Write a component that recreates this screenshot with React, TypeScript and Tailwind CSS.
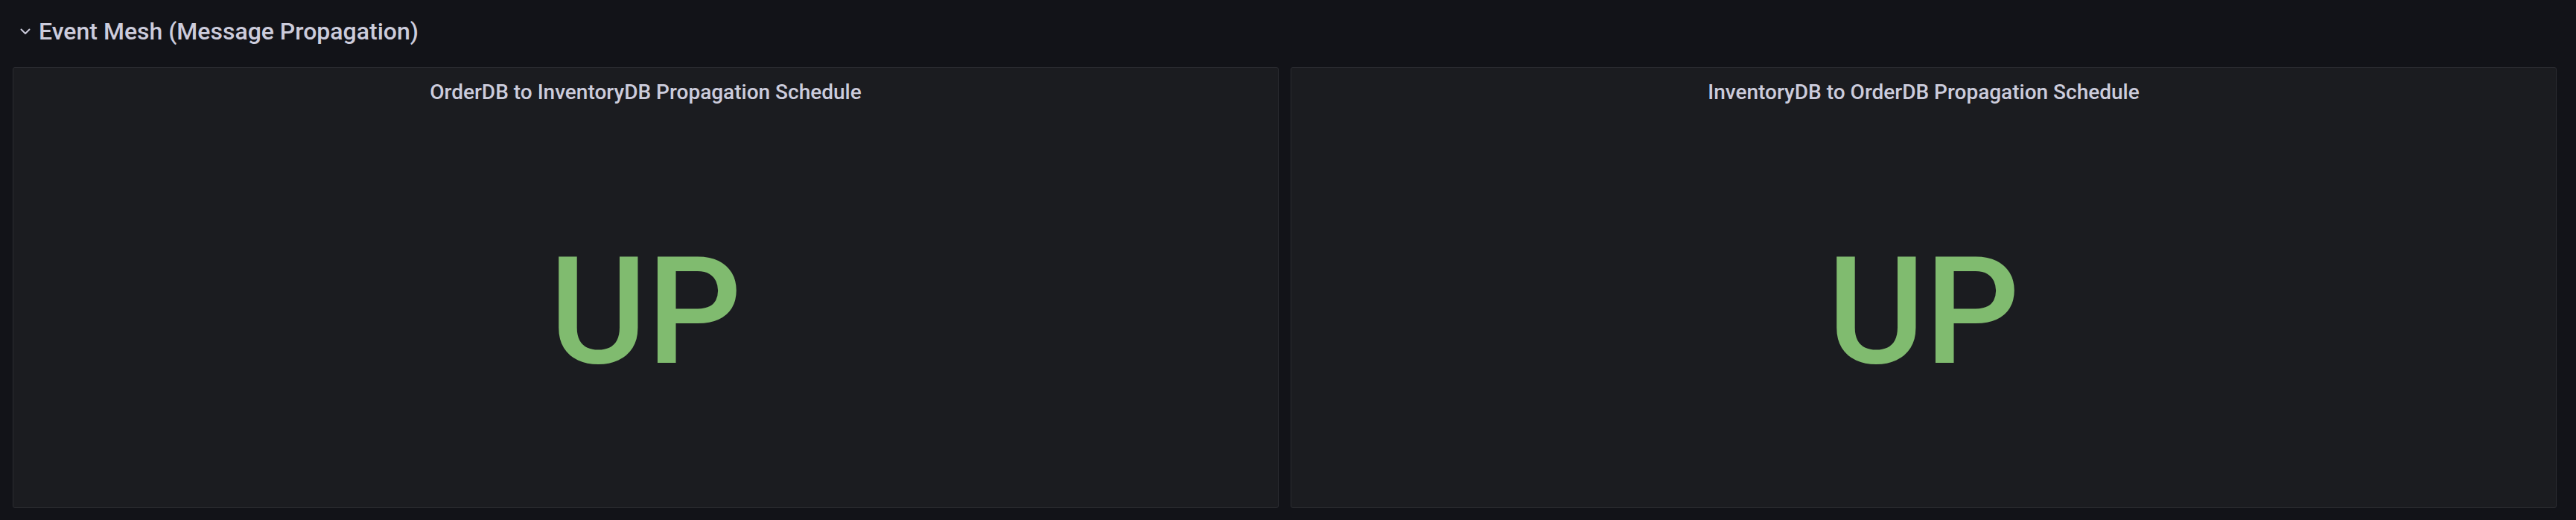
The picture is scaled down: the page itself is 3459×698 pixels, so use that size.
const panels = [
  { id: 'order-to-inventory', title: 'OrderDB to InventoryDB Propagation Schedule', value: 'UP' },
  { id: 'inventory-to-order', title: 'InventoryDB to OrderDB Propagation Schedule', value: 'UP' },
];

const Chevron = () => (
  <svg width="14" height="9" viewBox="0 0 14 9" fill="none" className="shrink-0">
    <path d="M1.5 1.5 L7 7 L12.5 1.5" stroke="#ccccdc" strokeWidth="2" strokeLinecap="round" strokeLinejoin="round" />
  </svg>
);

const StatPanel = ({ title, value }: { title: string; value: string }) => (
  <div className="flex-1 flex flex-col bg-[#1b1c20] border border-[#2b2c31] rounded-[3px] overflow-hidden">
    {/* panel header */}
    <div className="h-[66px] flex items-center justify-center">
      <h2 className="text-[28px] font-medium text-[#ccccdc] leading-none">{title}</h2>
    </div>
    {/* big stat value */}
    <div className="flex-1 flex items-center justify-center">
      <span className="text-[200px] leading-none font-medium text-[#80bb6f]">{value}</span>
    </div>
  </div>
);

export default function App() {
  return (
    <div
      className="w-full h-[698px] bg-[#121318] flex flex-col"
      style={{ fontFamily: 'Roboto, "Liberation Sans", "Noto Sans", sans-serif' }}
    >
      {/* Row header */}
      <div className="h-[84px] shrink-0 flex items-center gap-[11px] pl-[27px]">
        <Chevron />
        <span className="text-[32px] font-medium text-[#ccccdc] leading-none">Event Mesh (Message Propagation)</span>
      </div>

      {/* Panels */}
      <div className="flex-1 flex gap-[16px] pt-[6px] pl-[17px] pr-[26px] pb-[16px]">
        {panels.map((p) => (
          <StatPanel key={p.id} title={p.title} value={p.value} />
        ))}
      </div>
    </div>
  );
}
